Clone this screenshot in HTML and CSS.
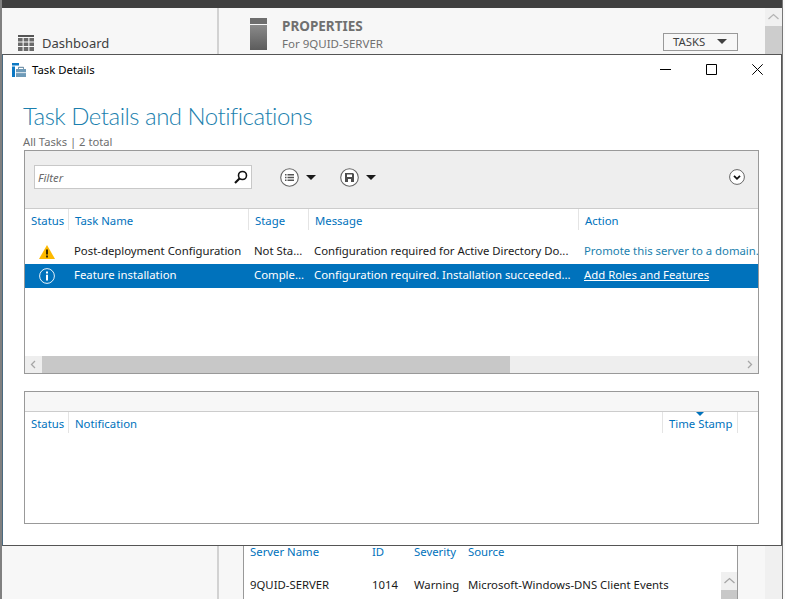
FILE: index.html
```html
<!DOCTYPE html>
<html lang="en">
<head>
<meta charset="utf-8">
<title>Task Details</title>
<link rel="stylesheet" href="styles.css">
</head>
<body>
<div class="app">
  <div class="topbar"></div>
  <div class="workspace">
    <aside class="sidebar">
      <div class="nav-item">
        <svg class="nav-icon" width="16" height="16" viewBox="0 0 16 16"><path fill="#555" d="M0 0h16v2H0z"/><path fill="#6a6a6a" d="M0 3h4.600v3.500H0zM5.700 3h4.600v3.500H5.700zM11.400 3H16v3.500h-4.600zM0 7.500h4.600V11H0zM5.700 7.500h4.600V11H5.700zM11.400 7.500H16V11h-4.600zM0 12h4.600v4H0zM5.700 12h4.600v4H5.700zM11.400 12H16v4h-4.600z"/></svg>
        <span>Dashboard</span>
      </div>
    </aside>
    <main class="main">
      <header class="props">
        <svg class="server-icon" width="17" height="32" viewBox="0 0 17 32"><defs><linearGradient id="srv" x1="0" y1="0" x2="0" y2="1"><stop offset="0" stop-color="#8a8a8a"/><stop offset="1" stop-color="#5c5c5c"/></linearGradient></defs><path fill="#6e6e6e" d="M0 0h17v6H0z"/><path fill="url(#srv)" d="M0 7h17v25H0z"/></svg>
        <div class="props-text">
          <div class="props-title">PROPERTIES</div>
          <div class="props-sub">For 9QUID-SERVER</div>
        </div>
        <div class="tasks-btn"><span>TASKS</span><i class="tasks-caret"></i></div>
      </header>
      <div class="events-spacer"></div>
      <section class="events">
        <div class="events-head">
          <span class="ev-c1">Server Name</span><span class="ev-c2">ID</span><span class="ev-c3">Severity</span><span class="ev-c4">Source</span>
        </div>
        <div class="events-row">
          <span class="ev-c1">9QUID-SERVER</span><span class="ev-c2">1014</span><span class="ev-c3">Warning</span><span class="ev-c4">Microsoft-Windows-DNS Client Events</span>
          <div class="ev-scroll"><svg width="17" height="18" viewBox="0 0 17 18"><path fill="none" stroke="#a6a6a6" stroke-width="1.300" d="M3.500 11l5-4.500 5 4.500"/></svg><b></b></div>
        </div>
      </section>
    </main>
    <div class="app-scroll">
      <div class="app-scroll-up"><svg width="17" height="18" viewBox="0 0 17 18"><path fill="none" stroke="#b5b5b5" stroke-width="1.300" d="M3.500 11l5-4.500 5 4.500"/></svg></div>
      <div class="app-scroll-thumb"></div>
    </div>
  </div>
</div>

<div class="dialog">
  <div class="titlebar">
    <svg class="dlg-icon" width="14" height="14" viewBox="0 0 14 14"><path fill="#0b78c4" d="M0 0h7v2.500H0zM0 3.500h3V14H0z"/><path fill="#6f9bb8" d="M4 6h10v8H4z"/><path fill="none" stroke="#5a7f99" stroke-width="1" d="M6.500 5.800V4.300h5v1.500"/><path fill="#fff" d="M4 9.300h10v.8H4z"/></svg>
    <span class="dlg-name">Task Details</span>
    <div class="win-btns">
      <svg width="11" height="11" viewBox="0 0 11 11"><path stroke="#000" d="M0 5.500h11"/></svg>
      <svg width="11" height="11" viewBox="0 0 11 11"><path fill="none" stroke="#000" d="M.5.500h10v10H.5z"/></svg>
      <svg width="11" height="11" viewBox="0 0 11 11"><path stroke="#000" d="M.3.300l10.400 10.400M10.700.300L.3 10.700"/></svg>
    </div>
  </div>
  <div class="dlg-body">
    <h1 class="dlg-title">Task Details and Notifications</h1>
    <div class="dlg-count">All Tasks | 2 total</div>

    <section class="panel tasks-panel">
      <div class="toolbar">
        <div class="filter"><span>Filter</span>
          <svg width="14" height="14" viewBox="0 0 14 14"><circle cx="8.500" cy="5.500" r="4" fill="none" stroke="#111" stroke-width="1.600"/><path stroke="#111" stroke-width="2.200" d="M5.500 8.500L1 13"/></svg>
        </div>
        <div class="tool tool-a">
          <svg width="19" height="19" viewBox="0 0 19 19"><circle cx="9.500" cy="9.500" r="8.800" fill="#fff" stroke="#666" stroke-width="1.100"/><path fill="#555" d="M5 6h1.500v1.500H5zM7.500 6H14v1.500H7.500zM5 8.800h1.500v1.500H5zM7.500 8.800H14v1.500H7.500zM5 11.500h1.500V13H5zM7.500 11.500H14V13H7.500z"/></svg>
          <i class="caret"></i>
        </div>
        <div class="tool tool-b">
          <svg width="19" height="19" viewBox="0 0 19 19"><circle cx="9.500" cy="9.500" r="8.800" fill="#fff" stroke="#666" stroke-width="1.100"/><path fill="#4d4d4d" d="M5 5h8l1 1v8H5z"/><path fill="#fff" d="M7 6.500h5V9H7zM8 11h3v3H8z"/></svg>
          <i class="caret"></i>
        </div>
        <svg class="expand" width="16" height="16" viewBox="0 0 16 16"><circle cx="8" cy="8" r="7.400" fill="#fff" stroke="#666"/><path fill="none" stroke="#111" stroke-width="1.800" d="M5 6.800l3 3 3-3"/></svg>
      </div>
      <div class="grid-head tasks-cols">
        <span class="hc">Status</span><span class="hc">Task Name</span><span class="hc">Stage</span><span class="hc">Message</span><span class="hc">Action</span>
      </div>
      <div class="rows">
        <div class="row tasks-cols">
          <span class="cell cell-icon"><svg width="16" height="14" viewBox="0 0 16 14"><path fill="#fdb900" d="M8 0l8 14H0z"/><path fill="#3a2a00" d="M7 4.500h2v5H7zM7 10.500h2v2H7z"/></svg></span>
          <span class="cell cell-text">Post-deployment Configuration</span>
          <span class="cell cell-text">Not Sta...</span>
          <span class="cell cell-text">Configuration required for Active Directory Do...</span>
          <span class="cell cell-text cell-link">Promote this server to a domain.</span>
        </div>
        <div class="row row-sel tasks-cols">
          <span class="cell cell-icon"><svg width="16" height="16" viewBox="0 0 16 16"><circle cx="8" cy="8" r="7.400" fill="none" stroke="#fff" stroke-width=".9"/><path fill="#fff" d="M7 3.500h2v2H7zM7 6.800h2v5.700H7z"/></svg></span>
          <span class="cell cell-text">Feature installation</span>
          <span class="cell cell-text">Comple...</span>
          <span class="cell cell-text">Configuration required. Installation succeeded...</span>
          <span class="cell cell-text cell-sel-link">Add Roles and Features</span>
        </div>
      </div>
      <div class="hscroll">
        <div class="hs-btn"><svg width="17" height="17" viewBox="0 0 17 17"><path fill="none" stroke="#a6a6a6" stroke-width="1.300" d="M10 5l-3.500 3.500L10 12"/></svg></div>
        <div class="hs-thumb"></div>
        <div class="hs-rest"></div>
        <div class="hs-btn"><svg width="17" height="17" viewBox="0 0 17 17"><path fill="none" stroke="#a6a6a6" stroke-width="1.300" d="M7 5l3.500 3.500L7 12"/></svg></div>
      </div>
    </section>

    <section class="panel notes-panel">
      <div class="notes-strip"></div>
      <div class="grid-head notes-cols">
        <span class="hc">Status</span><span class="hc">Notification</span><span class="hc hc-sort"><i class="sort"></i>Time Stamp</span><span class="hc"></span>
      </div>
    </section>
  </div>
</div>
</body>
</html>
```
FILE: styles.css
```css
* { box-sizing: border-box; }
html, body { margin: 0; padding: 0; }
body {
  position: relative;
  width: 785px;
  height: 599px;
  overflow: hidden;
  background: #fafafa;
  font-family: "Noto Sans", "Open Sans", sans-serif;
  font-size: 11.350px;
  color: #1a1a1a;
}
.app {
  width: 783px;
  height: 599px;
  border-left: 2px solid #808080;
  border-right: 1px solid #777;
  display: flex;
  flex-direction: column;
}
.topbar { height: 8px; flex: none; background: #404040; }
.workspace { flex: 1; display: flex; min-height: 0; background: #f7f7f7; }
.sidebar { width: 217px; flex: none; padding-top: 26px; border-right: 2px solid #d2d2d2; }
.nav-item { display: flex; align-items: center; gap: 8px; padding-left: 16px; font-size: 13px; color: #404040; }
.main { flex: 1; display: flex; flex-direction: column; min-width: 0; padding-top: 10px; }
.props { display: flex; height: 33px; padding-left: 31px; padding-right: 27px; }
.server-icon { flex: none; }
.props-text { margin-left: 15px; flex: 1; }
.props-title { font-size: 13.500px; font-weight: 700; color: #707070; line-height: 17px; }
.props-sub { font-size: 11.500px; color: #707070; line-height: 17px; }
.tasks-btn { align-self: flex-end; width: 75px; height: 18px; border: 1px solid #999; display: flex; align-items: center; justify-content: space-between; padding: 0 10px 1px 9px; background: #f7f7f7; color: #404040; }
.tasks-caret { width: 0; height: 0; border: 5px solid transparent; border-top-color: #404040; border-bottom: 0; }
.events-spacer { flex: 1; }
.events { margin: 0 27px 0 24px; height: 57px; border-left: 1px solid #999; border-right: 1px solid #999; background: #fff; }
.events-head, .events-row { display: flex; position: relative; }
.events-head { height: 30px; padding-top: 2px; color: #0072bc; }
.events-row { height: 27px; align-items: center; padding-bottom: 3px; }
.ev-c1 { width: 128px; padding-left: 6px; flex: none; }
.ev-c2 { width: 42px; flex: none; }
.ev-c3 { width: 54px; flex: none; }
.ev-c4 { flex: 1; }
.ev-scroll { position: absolute; right: 0; top: 0; width: 16px; height: 27px; background: #f0f0f0; }
.ev-scroll svg { display: block; }
.ev-scroll b { display: block; height: 9px; background: #c8c8c8; }
.app-scroll { width: 17px; flex: none; background: #f0f0f0; }
.app-scroll-up svg { display: block; }
.app-scroll-thumb { height: 300px; background: #cdcdcd; }
.app-scroll-up { height: 18px; }

.dialog {
  position: absolute;
  left: 2px;
  top: 54px;
  width: 780px;
  height: 492px;
  background: #fff;
  border: 1px solid #555;
  border-left-color: #4a6a80;
  display: flex;
  flex-direction: column;
}
.titlebar { height: 29px; flex: none; display: flex; align-items: center; padding-left: 9px; }
.dlg-icon { flex: none; }
.dlg-name { margin-left: 6px; color: #000; }
.win-btns { margin-left: auto; display: flex; gap: 35px; padding-right: 18px; }
.dlg-body { flex: 1; padding: 0 22px 0 21px; display: flex; flex-direction: column; min-height: 0; }
.dlg-title { margin: 16px 0 0 -1px; font-family: Lato, sans-serif; font-size: 24px; font-weight: 300; letter-spacing: -.5px; line-height: 32px; color: #1b7fae; }
.dlg-count { font-size: 11.200px; line-height: 16px; margin: 2px 0 0 -1px; color: #6e6e6e; }
.panel { border: 1px solid #999; background: #fff; }
.tasks-panel { height: 224px; display: flex; flex-direction: column; }
.notes-panel { height: 133px; margin-top: 17px; display: flex; flex-direction: column; }
.toolbar { height: 58px; flex: none; background: #eee; border-bottom: 1px solid #ccc; display: flex; align-items: center; padding-left: 9px; padding-bottom: 5px; }
.filter { width: 218px; height: 24px; border: 1px solid #c8c8c8; background: #fff; display: flex; align-items: center; justify-content: space-between; padding: 0 3px 0 3px; font-style: italic; color: #6a6a6a; }
.tool { display: flex; align-items: center; gap: 7px; }
.tool-a { margin-left: 28px; }
.tool-b { margin-left: 24px; }
.expand { margin-left: auto; margin-right: 13px; }
.caret { width: 0; height: 0; border: 5.500px solid transparent; border-top: 5.500px solid #1a1a1a; border-bottom: 0; }
.grid-head { height: 25px; flex: none; color: #0072bc; }
.tasks-cols { display: grid; grid-template-columns: 43px 180px 60px 270px 1fr; }
.notes-cols { display: grid; grid-template-columns: 43px 594px 75px 1fr; }
.hc { padding: 3px 0 0 6px; border-left: 1px solid #e4e4e4; height: 21px; line-height: 17px; position: relative; white-space: nowrap; }
.hc:first-child { border-left: 0; }
.rows { flex: 1; padding-top: 6px; }
.row { height: 24px; align-items: center; color: #1a1a1a; white-space: nowrap; }
.cell { padding-left: 6px; overflow: hidden; }
.cell-text { padding-bottom: 3px; }
.cell-icon { display: flex; justify-content: center; padding-left: 0; padding-right: 0; }
.cell-link { color: #1b7fae; }
.row-sel { background: #0072bc; color: #fff; }
.cell-sel-link { text-decoration: underline; }
.hscroll { height: 17px; flex: none; display: flex; background: #eee; }
.hs-btn { width: 17px; flex: none; }
.hs-btn svg { display: block; }
.hs-thumb { width: 468px; background: #c8c8c8; }
.hs-rest { flex: 1; }
.notes-strip { height: 20px; flex: none; background: #f7f7f7; border-bottom: 1px solid #ccc; }
.sort { position: absolute; left: 33px; top: 0; width: 0; height: 0; border: 4px solid transparent; border-top: 4px solid #0072bc; border-bottom: 0; }
```
